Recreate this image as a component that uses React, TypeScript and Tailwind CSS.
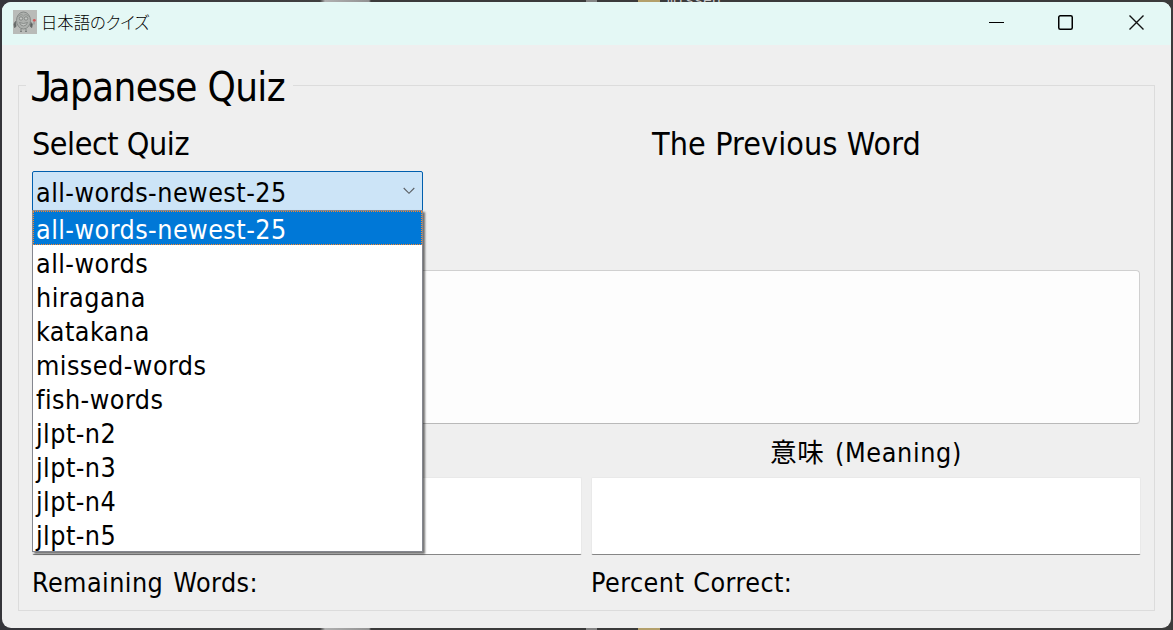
const OPTIONS = [
  "all-words-newest-25",
  "all-words",
  "hiragana",
  "katakana",
  "missed-words",
  "fish-words",
  "jlpt-n2",
  "jlpt-n3",
  "jlpt-n4",
  "jlpt-n5",
];

function AppIcon() {
  return (
    <svg width="24" height="24" viewBox="0 0 24 24" className="shrink-0">
      <rect width="24" height="24" fill="#b9bbb8" />
      <path d="M2.500 11.500L1 14l.5 3.500 1.500-1z" fill="#555957" stroke="#6b6f6d" />
      <path d="M17.500 12l1.800 2-.5 3.500-1.500-1z" fill="#555957" stroke="#6b6f6d" />
      <ellipse cx="10.500" cy="10.500" rx="7" ry="8.500" fill="#adb0ad" stroke="#858987" />
      <path d="M5.500 6.500q2.500-3.500 5-.5 2.500-3 5 .5" fill="none" stroke="#8b8f8c" strokeWidth=".8" />
      <circle cx="8" cy="8.500" r="1.700" fill="#c4c7c4" stroke="#777b79" strokeWidth=".8" />
      <circle cx="13" cy="8.500" r="1.700" fill="#c4c7c4" stroke="#777b79" strokeWidth=".8" />
      <path d="M6.500 12.500q4 2 8 0-1 3.500-4 3.500t-4-3.500z" fill="#c0c3c0" stroke="#7d817f" strokeWidth=".8" />
      <path d="M8 21.500v-2.500M7 21.500h2M13 21.500v-2.500M12 21.500h2" fill="none" stroke="#7d817f" />
      <path d="M21 11.500v3" stroke="#8b8f8c" />
      <circle cx="21.300" cy="10.300" r="1.400" fill="#cf5a5a" />
    </svg>
  );
}

function TitleBar() {
  return (
    <header className="flex h-[43px] shrink-0 items-center bg-[#e4f8f5] pl-[11px]">
      <div className="-mt-[3px] flex items-center">
        <AppIcon />
        <span className="-mt-px ml-[4px] origin-left scale-x-[.96] whitespace-nowrap font-['Noto_Sans_CJK_JP',sans-serif] text-[17px] font-light leading-6 [font-feature-settings:'palt']">
          日本語のクイズ
        </span>
      </div>
      <div className="-mt-[4px] ml-auto mr-[26px] flex items-center">
        <svg width="16" height="16" viewBox="0 0 16 16" shapeRendering="crispEdges">
          <path d="M0 8.500h15" stroke="#000" />
        </svg>
        <svg width="16" height="16" viewBox="0 0 16 16" className="ml-[53px]">
          <rect x=".75" y="1.750" width="13.500" height="13.500" rx="1.500" fill="none" stroke="#000" strokeWidth="1.500" />
        </svg>
        <svg width="16" height="16" viewBox="0 0 16 16" className="ml-[55px]">
          <path d="M.5 1.500l14 14M14.500 1.500l-14 14" stroke="#111" strokeWidth="1.400" />
        </svg>
      </div>
    </header>
  );
}

function QuizSelect() {
  return (
    <div className="relative h-[99px]">
      <button className="flex h-10 w-[391px] items-center justify-between rounded-t-[2px] border border-[#005fae] bg-[#cce4f7] pl-[3px] pr-[7px]">
        <span className="mt-[4px] text-[26.67px] leading-[34px] tracking-[0.45px]">{OPTIONS[0]}</span>
        <svg width="12" height="8" viewBox="0 0 12 8">
          <path d="M.7 1l5.300 5.300L11.300 1" fill="none" stroke="#5b5f64" strokeWidth="1.100" />
        </svg>
      </button>
      <ul className="absolute left-0 top-[39px] z-10 w-[391px] border border-[#85878f] bg-white shadow-[2px_2px_2px_rgba(0,0,0,0.55)]">
        {OPTIONS.map((option, i) => (
          <li
            key={option}
            className={
              i === 0
                ? "h-[34px] bg-[#0078d7] pl-[3px] text-[26.67px] leading-[38px] tracking-[0.45px] text-white outline-1 -outline-offset-1 outline-dotted outline-[#ff8728]"
                : "h-[34px] pl-[3px] text-[26.67px] leading-[38px] tracking-[0.45px]"
            }
          >
            {option}
          </li>
        ))}
      </ul>
    </div>
  );
}

export default function App() {
  return (
    <div className="relative flex h-[630px] w-[1173px] overflow-hidden bg-[linear-gradient(90deg,#35353a_0,#404040_320px,#b0b0b0_325px,#929292_369px,#3b3b3b_371px,#3b3b3b_586px,#858585_586px,#858585_597px,#3b3b3b_597px,#3b3b3b_638px,#b3a06b_638px,#b3a06b_660px,#3b3b3b_660px)] p-[2px] font-['DejaVu_Sans_Condensed','DejaVu_Sans','Noto_Sans_CJK_JP',sans-serif] text-black [font-stretch:condensed]">
      <span className="absolute -top-[7px] left-[667px] font-['Liberation_Mono',monospace] text-[15px] leading-[18px] text-[#c8c8c8]">
        missed
      </span>
      <main className="relative flex w-[1169px] flex-col overflow-hidden rounded-[9px] bg-[#efefef]">
        <TitleBar />
        <fieldset className="mx-4 mt-[18px] h-[548px] border border-[#dcdcdc] px-[13px]">
          <legend className="-ml-[6px] h-[45px] w-[267px] whitespace-nowrap px-[6px] pt-[3px] text-[40px] leading-[42px] tracking-[-0.65px]">
            <span className="-ml-[2px] font-['DejaVu_Sans_Mono',monospace] tracking-[-5.600px]">J</span>apanese Quiz
          </legend>
          <div className="grid grid-cols-[391px_1fr] gap-x-[9px] pt-4 text-[32px] leading-10">
            <div className="tracking-[-0.45px]">Select Quiz</div>
            <div className="text-center tracking-[0.1px]">The Previous Word</div>
          </div>
          <div className="pt-[7px]">
            <QuizSelect />
          </div>
          <div className="mr-px h-[154px] rounded-[4px] border border-[#d0d0d0] border-b-[#b9b9b9] bg-[#fdfdfd]" />
          <div className="grid grid-cols-[550px_550px] gap-x-[9px] text-[26.67px] tracking-[0.45px]">
            <div className="h-[53px] text-center leading-[57px]">読み (Reading)</div>
            <div className="h-[53px] text-center leading-[57px] tracking-[0.65px] [word-spacing:2px]">意味 (Meaning)</div>
            <div className="h-[78px] rounded-[2px] border border-[#e9e9e9] border-b-[#868686] bg-white" />
            <div className="h-[78px] rounded-[2px] border border-[#e9e9e9] border-b-[#868686] bg-white" />
            <div className="leading-[56px] [word-spacing:2px]">Remaining Words:</div>
            <div className="leading-[56px] [word-spacing:1px]">Percent Correct:</div>
          </div>
        </fieldset>
      </main>
    </div>
  );
}
